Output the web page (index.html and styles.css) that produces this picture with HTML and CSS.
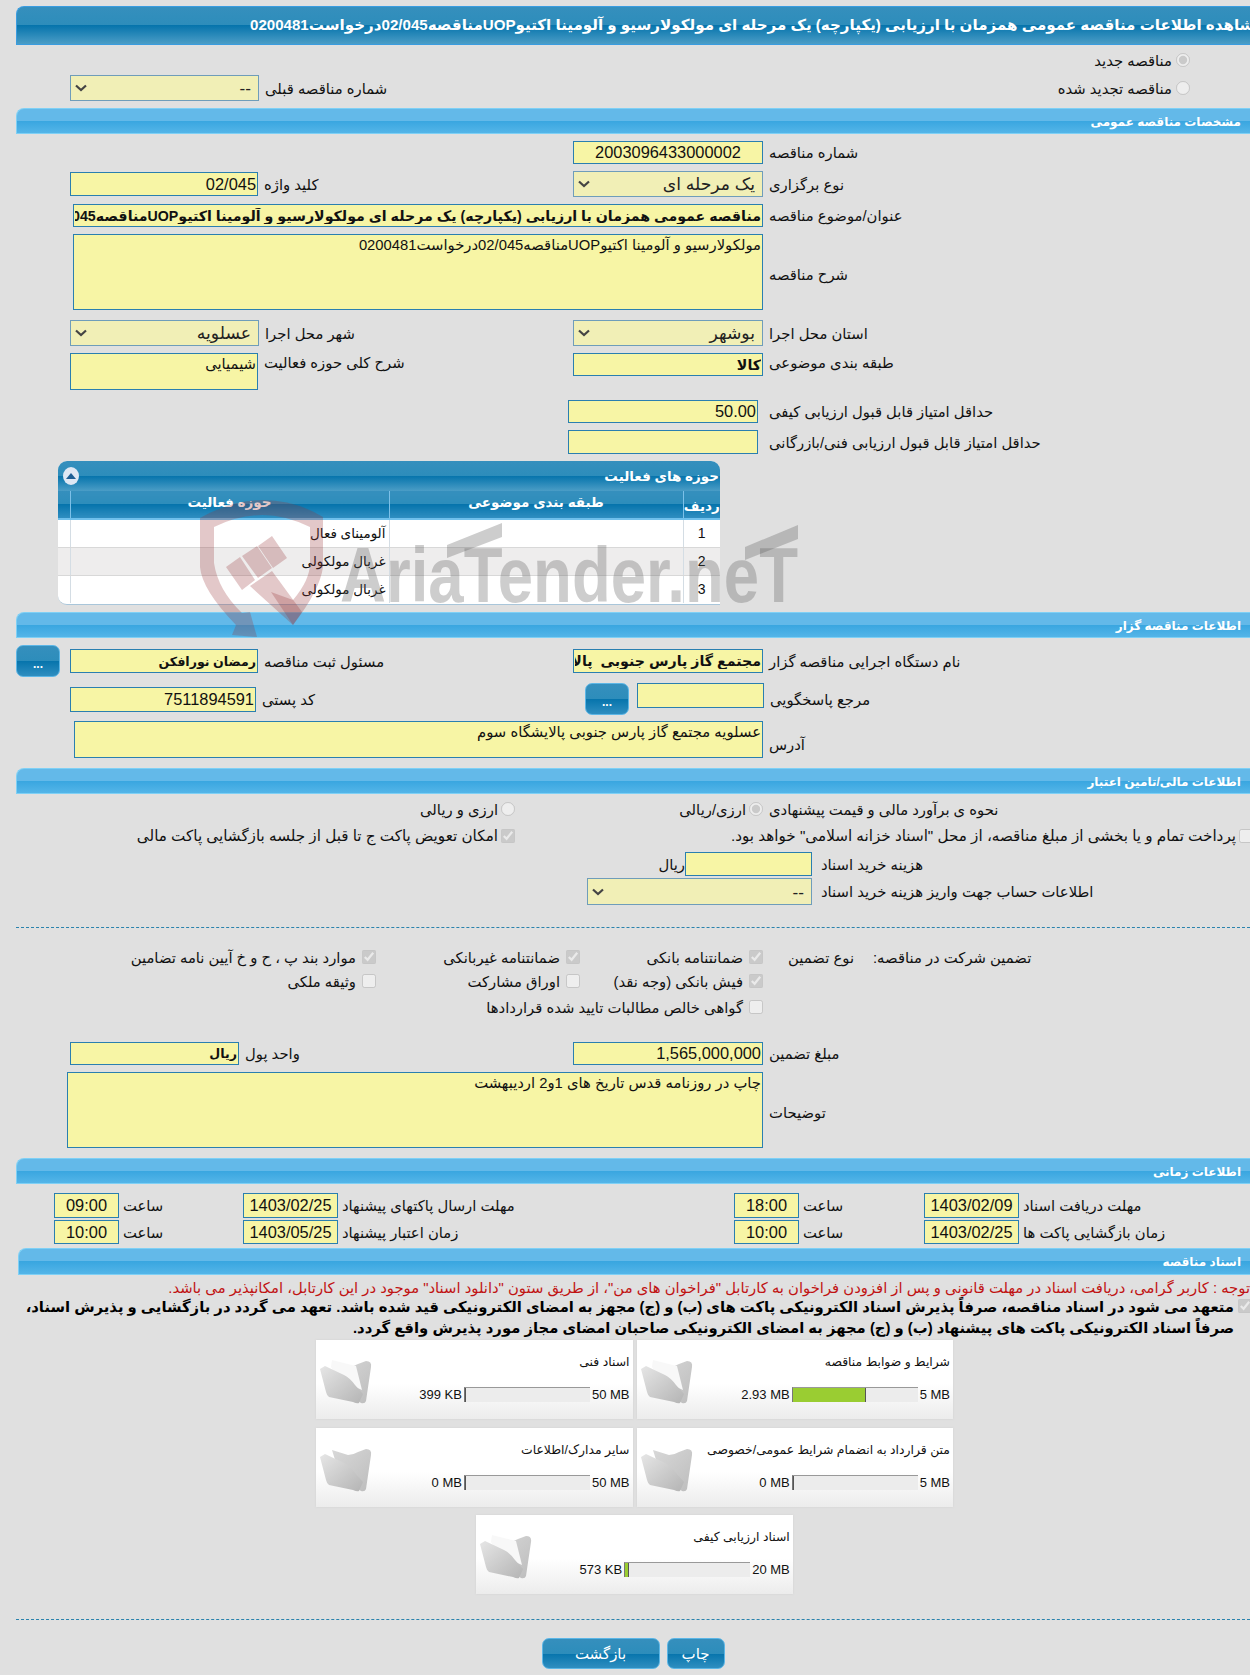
FILE: index.html
```html
<!DOCTYPE html>
<html lang="fa">
<head>
<meta charset="utf-8">
<title>مشاهده اطلاعات مناقصه</title>
<link rel="stylesheet" href="styles.css">
</head>
<body>
<svg class="defs" width="0" height="0" aria-hidden="true">
  <defs>
    <linearGradient id="fg" x1="0" y1="0" x2="1" y2="1"><stop offset="0" stop-color="#e6e6e6"/><stop offset="1" stop-color="#b4b4b4"/></linearGradient>
    <linearGradient id="bg" x1="0" y1="0" x2="1" y2="1"><stop offset="0" stop-color="#d8d8d8"/><stop offset="1" stop-color="#bdbdbd"/></linearGradient>
    <symbol id="folder-empty" viewBox="0 0 52 46">
      <path d="M12 4 L28 9 Q33 9 38 6 L46 3 Q52 3 51 9 L46 43 Q45 46 41 45 L20 30 Z" fill="url(#bg)"/>
      <path d="M0 11 L5 8 L24 17 Q30 20 35 27 L43 36 L39 45 Q37 46 33 44 L9 39 Q7 38 6 34 Z" fill="url(#fg)"/>
    </symbol>
    <symbol id="folder-full" viewBox="0 0 52 46">
      <path d="M12 4 L28 9 Q33 9 38 6 L46 3 Q52 3 51 9 L46 43 Q45 46 41 45 L20 30 Z" fill="url(#bg)"/>
      <path d="M12 2 L36 8 L42 32 L20 22 L11 9 Z" fill="#f8f8f8"/>
      <path d="M0 11 L5 8 L24 17 Q30 20 35 27 L43 36 L39 45 Q37 46 33 44 L9 39 Q7 38 6 34 Z" fill="url(#fg)"/>
    </symbol>
  </defs>
</svg>

<div class="title-bar"><span class="title-text">مشاهده اطلاعات مناقصه عمومی همزمان با ارزیابی (یکپارچه) یک مرحله ای مولکولارسیو و آلومینا اکتیوUOPمناقصه02/045درخواست0200481</span></div>

<div class="row h30">
  <div class="opt-right"><input type="radio" disabled checked><span class="lbl">مناقصه جدید</span></div>
</div>
<div class="row">
  <div class="col-a">
    <select class="sel w189 h26" disabled dir="rtl"><option>--</option></select>
    <span class="lbl">شماره مناقصه قبلی</span>
  </div>
  <div class="col-b end"><div class="opt-right"><input type="radio" disabled><span class="lbl">مناقصه تجدید شده</span></div></div>
</div>

<div class="bar mt7"><span class="bar-text">مشخصات مناقصه عمومی</span></div>

<div class="row mt7">
  <div class="col-a"></div>
  <div class="col-b"><input class="fld w190 h23 center" readonly value="2003096433000002"><span class="lbl">شماره مناقصه</span></div>
</div>
<div class="row mt7">
  <div class="col-a"><input class="fld w188 h24" readonly dir="rtl" value="02/045"><span class="lbl">کلید واژه</span></div>
  <div class="col-b"><select class="sel w190 h26" disabled dir="rtl"><option>یک مرحله ای</option></select><span class="lbl">نوع برگزاری</span></div>
</div>
<div class="row mt7">
  <div class="col-wide"><input class="fld w690 h23 strong" readonly dir="rtl" value="مناقصه عمومی همزمان با ارزیابی (یکپارچه) یک مرحله ای مولکولارسیو و آلومینا اکتیوUOPمناقصه02/045درخواست0200481"><span class="lbl">عنوان/موضوع مناقصه</span></div>
</div>
<div class="row mt7">
  <div class="col-wide"><textarea class="fld ta w690 h76" readonly dir="rtl">مولکولارسیو و آلومینا اکتیوUOPمناقصه02/045درخواست0200481</textarea><span class="lbl">شرح مناقصه</span></div>
</div>
<div class="row mt10">
  <div class="col-a"><select class="sel w189 h26" disabled dir="rtl"><option>عسلویه</option></select><span class="lbl">شهر محل اجرا</span></div>
  <div class="col-b"><select class="sel w190 h26" disabled dir="rtl"><option>بوشهر</option></select><span class="lbl">استان محل اجرا</span></div>
</div>
<div class="row mt7 top">
  <div class="col-a"><textarea class="fld ta w188 h37" readonly dir="rtl">شیمیایی</textarea><span class="lbl">شرح کلی حوزه فعالیت</span></div>
  <div class="col-b"><input class="fld w190 h23 strong" readonly dir="rtl" value="کالا"><span class="lbl">طبقه بندی موضوعی</span></div>
</div>
<div class="row mt10">
  <div class="col-a"></div>
  <div class="col-b shifted"><input class="fld w190 h23" readonly dir="rtl" value="50.00"><span class="lbl">حداقل امتیاز قابل قبول ارزیابی کیفی</span></div>
</div>
<div class="row mt7">
  <div class="col-a"></div>
  <div class="col-b shifted"><input class="fld w190 h24" readonly dir="rtl" value=""><span class="lbl">حداقل امتیاز قابل قبول ارزیابی فنی/بازرگانی</span></div>
</div>

<section class="panel">
  <div class="panel-head">
    <span class="collapse"><svg width="10" height="6" viewBox="0 0 10 6"><path d="M5 0 L10 6 H0 Z" fill="#1f5f95"/></svg></span>
    <span class="panel-title">حوزه های فعالیت</span>
  </div>
  <table class="grid-table">
    <thead><tr><th class="c-num">ردیف</th><th class="c-cat">طبقه بندی موضوعی</th><th class="c-act">حوزه فعالیت</th><th class="c-end"></th></tr></thead>
    <tbody>
      <tr><td class="c-num">1</td><td></td><td>آلومینای فعال</td><td></td></tr>
      <tr class="alt"><td class="c-num">2</td><td></td><td>غربال مولکولی</td><td></td></tr>
      <tr><td class="c-num">3</td><td></td><td>غربال مولکولی</td><td></td></tr>
    </tbody>
  </table>
</section>

<div class="bar mt7"><span class="bar-text">اطلاعات مناقصه گزار</span></div>

<div class="row mt7 h32">
  <div class="col-a flush"><button class="btn dots" type="button">...</button><input class="fld w188 h24 strong-s" readonly dir="rtl" value="رمضان نورافکن"><span class="lbl">مسئول ثبت مناقصه</span></div>
  <div class="col-b"><input class="fld w190 h24 strong" readonly dir="rtl" value="مجتمع گاز پارس جنوبی  پالایشگاه سوم"><span class="lbl">نام دستگاه اجرایی مناقصه گزار</span></div>
</div>
<div class="row mt6 h32">
  <div class="col-a"><input class="fld w186 h25" readonly dir="rtl" value="7511894591"><span class="lbl">کد پستی</span></div>
  <div class="col-b ref"><button class="btn dots" type="button">...</button><input class="fld w127 h25 up" readonly value=""><span class="lbl">مرجع پاسخگویی</span></div>
</div>
<div class="row mt6">
  <div class="col-wide left58"><textarea class="fld ta w689 h37" readonly dir="rtl">عسلویه مجتمع گاز پارس جنوبی پالایشگاه سوم</textarea><span class="lbl low">آدرس</span></div>
</div>

<div class="bar mt10"><span class="bar-text">اطلاعات مالی/تامین اعتبار</span></div>

<div class="row mt6 h18">
  <div class="col-half"><div class="chk"><input type="radio" disabled><span class="lbl">ارزی و ریالی</span></div></div>
  <div class="col-mid"><div class="chk"><input type="radio" disabled checked><span class="lbl">ارزی/ریالی</span></div></div>
  <span class="lbl lbl-gap">نحوه ی برآورد مالی و قیمت پیشنهادی</span>
</div>
<div class="row mt8 h20 wide-text">
  <div class="col-half"><div class="chk"><input type="checkbox" disabled checked><span class="lbl">امکان تعویض پاکت ج تا قبل از جلسه بازگشایی پاکت مالی</span></div></div>
  <div class="col-rest"><div class="chk"><input type="checkbox" disabled><span class="lbl">پرداخت تمام و یا بخشی از مبلغ مناقصه، از محل "اسناد خزانه اسلامی" خواهد بود.</span></div></div>
</div>
<div class="row mt6 fee">
  <span class="lbl unit">ریال</span><input class="fld w127 h24" readonly value=""><span class="lbl">هزینه خرید اسناد</span>
</div>
<div class="row mt2 account">
  <select class="sel w225 h27" disabled dir="rtl"><option>--</option></select><span class="lbl">اطلاعات حساب جهت واریز هزینه خرید اسناد</span>
</div>

<hr class="dash d1">

<div class="row g-row g-first">
  <div class="g-c1"><div class="chk"><input type="checkbox" disabled checked><span class="lbl">موارد بند پ ، ح و خ آیین نامه تضامین</span></div></div>
  <div class="g-c2"><div class="chk"><input type="checkbox" disabled checked><span class="lbl">ضمانتنامه غیربانکی</span></div></div>
  <div class="g-c3"><div class="chk"><input type="checkbox" disabled checked><span class="lbl">ضمانتنامه بانکی</span></div></div>
  <span class="lbl g-type">نوع تضمین</span>
  <span class="lbl">تضمین شرکت در مناقصه:</span>
</div>
<div class="row g-row mt4">
  <div class="g-c1"><div class="chk"><input type="checkbox" disabled><span class="lbl">وثیقه ملکی</span></div></div>
  <div class="g-c2"><div class="chk"><input type="checkbox" disabled><span class="lbl">اوراق مشارکت</span></div></div>
  <div class="g-c3"><div class="chk"><input type="checkbox" disabled checked><span class="lbl">فیش بانکی (وجه نقد)</span></div></div>
</div>
<div class="row g-row mt6">
  <div class="g-c1"></div>
  <div class="g-c23"><div class="chk"><input type="checkbox" disabled><span class="lbl">گواهی خالص مطالبات تایید شده قراردادها</span></div></div>
</div>

<div class="row mt25">
  <div class="col-a"><input class="fld w169 h23 strong-s" readonly dir="rtl" value="ریال"><span class="lbl">واحد پول</span></div>
  <div class="col-b"><input class="fld w190 h23" readonly dir="rtl" value="1,565,000,000"><span class="lbl">مبلغ تضمین</span></div>
</div>
<div class="row mt7">
  <div class="col-wide left67"><textarea class="fld ta w696 h76" readonly dir="rtl">چاپ در روزنامه قدس تاریخ های 1و2 اردیبهشت</textarea><span class="lbl">توضیحات</span></div>
</div>

<div class="bar mt10"><span class="bar-text">اطلاعات زمانی</span></div>

<div class="time-row mt9">
  <div class="t-cell"><input class="fld w65 h25 center" readonly value="09:00"><span class="lbl">ساعت</span></div>
  <div class="t-cell"><input class="fld w95 h25 center" readonly value="1403/02/25"><span class="lbl">مهلت ارسال پاکتهای پیشنهاد</span></div>
  <div class="t-cell"><input class="fld w65 h25 center" readonly value="18:00"><span class="lbl">ساعت</span></div>
  <div class="t-cell"><input class="fld w95 h25 center" readonly value="1403/02/09"><span class="lbl">مهلت دریافت اسناد</span></div>
</div>
<div class="time-row mt2">
  <div class="t-cell"><input class="fld w65 h24 center" readonly value="10:00"><span class="lbl">ساعت</span></div>
  <div class="t-cell"><input class="fld w95 h24 center" readonly value="1403/05/25"><span class="lbl">زمان اعتبار پیشنهاد</span></div>
  <div class="t-cell"><input class="fld w65 h24 center" readonly value="10:00"><span class="lbl">ساعت</span></div>
  <div class="t-cell"><input class="fld w95 h24 center" readonly value="1403/02/25"><span class="lbl">زمان بازگشایی پاکت ها</span></div>
</div>

<div class="bar bar-docs mt4"><span class="bar-text">اسناد مناقصه</span></div>

<div class="notice">توجه : کاربر گرامی، دریافت اسناد در مهلت قانونی و پس از افزودن فراخوان به کارتابل "فراخوان های من"، از طریق ستون "دانلود اسناد" موجود در این کارتابل، امکانپذیر می باشد.</div>
<div class="pledge">
  <input type="checkbox" disabled checked>
  <div class="pledge-text">متعهد می شود در اسناد مناقصه، صرفاً پذیرش اسناد الکترونیکی پاکت های (ب) و (ج) مجهز به امضای الکترونیکی قید شده باشد. تعهد می گردد در بازگشایی و پذیرش اسناد،<br>صرفاً اسناد الکترونیکی پاکت های پیشنهاد (ب) و (ج) مجهز به امضای الکترونیکی صاحبان امضای مجاز مورد پذیرش واقع گردد.</div>
</div>

<div class="cards">
  <article class="card">
    <div class="card-body"><div class="card-title">شرایط و ضوابط مناقصه</div>
      <div class="meter"><span>2.93 MB</span><div class="track"><div class="fill" style="width:59%"></div></div><span>5 MB</span></div></div>
    <svg class="folder"><use href="#folder-full"/></svg>
  </article>
  <article class="card">
    <div class="card-body"><div class="card-title">اسناد فنی</div>
      <div class="meter"><span>399 KB</span><div class="track"><div class="fill" style="width:1%"></div></div><span>50 MB</span></div></div>
    <svg class="folder"><use href="#folder-full"/></svg>
  </article>
  <article class="card">
    <div class="card-body"><div class="card-title">متن قرارداد به انضمام شرایط عمومی/خصوصی</div>
      <div class="meter"><span>0 MB</span><div class="track"><div class="fill" style="width:0"></div></div><span>5 MB</span></div></div>
    <svg class="folder"><use href="#folder-empty"/></svg>
  </article>
  <article class="card">
    <div class="card-body"><div class="card-title">سایر مدارک/اطلاعات</div>
      <div class="meter"><span>0 MB</span><div class="track"><div class="fill" style="width:0"></div></div><span>50 MB</span></div></div>
    <svg class="folder"><use href="#folder-empty"/></svg>
  </article>
  <article class="card">
    <div class="card-body"><div class="card-title">اسناد ارزیابی کیفی</div>
      <div class="meter"><span>573 KB</span><div class="track"><div class="fill" style="width:3%"></div></div><span>20 MB</span></div></div>
    <svg class="folder"><use href="#folder-full"/></svg>
  </article>
</div>

<hr class="dash d2">

<div class="actions">
  <button class="btn back" type="button">بازگشت</button>
  <button class="btn print" type="button">چاپ</button>
</div>

<svg class="watermark" width="1250" height="1676" viewBox="0 0 1250 1676" aria-hidden="true">
  <path class="wm-red" fill-rule="evenodd" d="M200 518 Q232 500 263 500 Q295 500 323 517 L323 567 Q320 590 293 625 L271 592 L293 600 Q310 580 310 563 L310 527 Q285 515 263 515 Q238 515 214 527 L214 563 Q218 590 242 613 L250 612 L257 637 L232 635 L236 625 Q202 590 200 567 Z"/>
  <path class="wm-red" d="M226 567 L240 557 L255 580 L242 590 Z M242 556 L257 546 L272 568 L258 578 Z M258 546 L272 536 L287 558 L273 568 Z M250 586 L272 571 L302 612 L293 625 Z"/>
  <text class="wm-text" x="340" y="602" textLength="458" lengthAdjust="spacingAndGlyphs">AriaTender.neT</text>
  <path class="wm-gray" d="M447 545 L502 523 L502 537 L447 558 Z M745 547 L798 525 L798 539 L745 560 Z"/>
</svg>
</body>
</html>
```

FILE: styles.css
```css
* { box-sizing: border-box; }
html { background: #fff; }
body {
  margin: 0;
  width: 1250px;
  height: 1675px;
  background: #e0e0e0;
  overflow: hidden;
  position: relative;
  font-family: "Liberation Sans", "DejaVu Sans", sans-serif;
  font-size: 14.8px;
  color: #111;
}
.defs { position: absolute; }

/* Bars */
.title-bar {
  margin: 6px 0 0 16px;
  height: 39px;
  padding-left: 233px;
  background: linear-gradient(#358fbd 0, #2d8dbb 50%, #0674ac 50%, #4b9dc6 100%);
  border: 1px solid #3a9ce0;
  border-right: 0;
  border-radius: 8px 0 0 0;
  overflow: hidden;
  white-space: nowrap;
  color: #fff;
  font-weight: bold;
  font-size: 15.1px;
  line-height: 36px;
}
.title-text { display: inline-block; direction: rtl; }
.bar {
  margin-left: 16px;
  height: 26px;
  background: linear-gradient(#63b9e9 0, #63b9e9 50%, #39a6e0 50%, #54b5e8 100%);
  border: 1px solid #7fd0f5;
  border-right: 0;
  border-radius: 8px 0 0 0;
  color: #fff;
  font-weight: bold;
  font-size: 12px;
  line-height: 26px;
  text-align: right;
  padding-right: 9px;
}
.bar-text { display: inline-block; direction: rtl; }
.bar-docs { margin-left: 18px; height: 27px; }

/* Rows */
.row { display: flex; align-items: center; padding-left: 16px; }
.row.top { align-items: flex-start; }
.col-a { width: 557px; padding-left: 54px; display: flex; align-items: center; gap: 6px; flex: none; }
.col-a.flush { padding-left: 0; }
.col-b { flex: 1; display: flex; align-items: center; gap: 6px; }
.row.top .col-a, .row.top .col-b { align-items: flex-start; }
.col-b.end { justify-content: flex-end; }
.col-b.shifted { margin-left: -5px; gap: 11px; }
.col-b.ref { margin-left: 12px; gap: 4px; }
.col-b.ref .lbl { margin-left: 2px; }
.col-wide { flex: 1; display: flex; align-items: center; gap: 6px; padding-left: 57px; }
.col-wide.left58 { padding-left: 58px; }
.col-wide.left67 { padding-left: 51px; }
.lbl { direction: rtl; white-space: nowrap; }
.lbl.low { margin-top: 10px; }
.ta.h76 + .lbl { margin-top: 4px; }
.opt-right { display: flex; direction: rtl; align-items: center; gap: 4px; margin-right: 60px; margin-left: auto; }
.row.top .lbl { margin-top: 1px; }

.col-half { width: 499px; flex: none; display: flex; justify-content: flex-end; }
.col-mid { width: 248px; flex: none; display: flex; justify-content: flex-end; }
.col-rest { flex: 1; display: flex; justify-content: flex-end; min-width: 0; margin-right: -3px; }
.lbl-gap { margin-left: 6px; }
.chk { display: flex; direction: rtl; align-items: center; gap: 3px; white-space: nowrap; }
.chk input { flex: none; }
.wide-text .lbl { font-size: 15.2px; }
input[type="radio"], input[type="checkbox"] { margin: 0; width: 14px; height: 14px; }
.fee { padding-left: 661px; gap: 9px; }
.fee .unit { margin-right: -9px; width: 24px; }
.account { padding-left: 587px; gap: 9px; }

.g-row { min-height: 20px; }
.g-row .chk { gap: 6px; }
.g-c1 { width: 360px; flex: none; display: flex; justify-content: flex-end; }
.g-c2 { width: 204px; flex: none; display: flex; justify-content: flex-end; }
.g-c3 { width: 183px; flex: none; display: flex; justify-content: flex-end; }
.g-c23 { width: 387px; flex: none; display: flex; justify-content: flex-end; }
.g-type { margin: 0 19px 0 25px; width: 66px; }

/* Fields */
.fld {
  margin: 0;
  padding: 0 1px;
  border: 1px solid #2a7fb0;
  background: #f7f5a5;
  color: #111;
  font-family: "Liberation Sans", "DejaVu Sans", sans-serif;
  font-size: 16.4px;
  outline: none;
  flex: none;
}
.fld.center { text-align: center; }
.fld.strong { font-weight: bold; font-size: 14.2px; }
.fld.strong-s { font-weight: bold; font-size: 12.6px; }
.fld.up { align-self: flex-start; }
.ta { resize: none; display: block; font-size: 14.8px; padding: 2px 1px; overflow: hidden; line-height: 17px; }
.sel {
  margin: 0;
  border: 1px solid #6f9dba;
  background: #f1efb6 url("data:image/svg+xml,%3Csvg xmlns='http://www.w3.org/2000/svg' width='12' height='8'%3E%3Cpath d='M1 1.5 L6 6 L11 1.5' fill='none' stroke='%23444' stroke-width='2.2'/%3E%3C/svg%3E") no-repeat 4px center;
  appearance: none;
  color: #222;
  opacity: 1;
  font-family: "Liberation Sans", "DejaVu Sans", sans-serif;
  font-size: 17.2px;
  flex: none;
  padding: 0 7px 0 20px;
}
.w65 { width: 65px; } .w95 { width: 95px; } .w127 { width: 127px; } .w169 { width: 169px; }
.w186 { width: 186px; } .w188 { width: 188px; } .w189 { width: 189px; } .w190 { width: 190px; }
.w225 { width: 225px; } .w689 { width: 689px; } .w690 { width: 690px; } .w696 { width: 696px; }
.h18 { height: 18px; } .h20 { height: 20px; } .h23 { height: 23px; } .h24 { height: 24px; }
.h25 { height: 25px; } .h26 { height: 26px; } .h27 { height: 27px; } .h30 { height: 30px; }
.h32 { height: 32px; } .h37 { height: 37px; } .h76 { height: 76px; }
.mt2 { margin-top: 2px; } .mt4 { margin-top: 4px; } .mt6 { margin-top: 6px; } .mt7 { margin-top: 7px; }
.mt8 { margin-top: 8px; } .mt9 { margin-top: 9px; } .mt10 { margin-top: 10px; } .mt25 { margin-top: 25px; }

/* Buttons */
.btn {
  border: 1px solid #5cb6e6;
  border-radius: 7px;
  background: linear-gradient(#358fbd 0, #2d8dbb 50%, #0674ac 50%, #2f8ec0 100%);
  color: #fff;
  font-family: "Liberation Sans", "DejaVu Sans", sans-serif;
  font-size: 15px;
  padding: 0;
  flex: none;
}
.dots { width: 44px; height: 32px; font-weight: bold; font-size: 12px; padding-top: 5px; margin-right: 4px; }
.back { width: 118px; height: 31px; }
.print { width: 58px; height: 31px; }

/* Panel */
.panel {
  margin: 7px 0 0 58px;
  width: 662px;
  height: 144px;
  background: #fff;
  border-radius: 9px 9px 0 9px;
  border-bottom: 1px solid #a9c6da;
  overflow: hidden;
}
.panel-head {
  height: 30px;
  display: flex;
  justify-content: space-between;
  align-items: center;
  padding: 0 1px 0 5px;
  background: linear-gradient(#358fbd 0, #2d8dbb 50%, #0674ac 50%, #4b9dc6 100%);
  color: #fff;
  font-weight: bold;
  font-size: 13.5px;
}
.panel-title { direction: rtl; }
.collapse {
  width: 16px;
  height: 18px;
  border-radius: 50%;
  background: #dfe8f4;
  display: flex;
  align-items: center;
  justify-content: center;
}
.grid-table { width: 100%; direction: rtl; border-collapse: collapse; table-layout: fixed; }
.grid-table th {
  height: 28px;
  background: linear-gradient(#358fbd 0, #2d8dbb 50%, #0674ac 50%, #2f8ec0 100%);
  border-left: 1px solid #7cc0e8;
  border-bottom: 2px solid #6fc0ec;
  color: #fff;
  font-size: 13.5px;
  padding: 0 0 6px;
}
.grid-table th.c-num { padding: 2px 0 0; }
.grid-table th.c-end { border-left: 0; }
.c-num { width: 37px; }
.c-cat { width: 294px; }
.c-act { width: 319px; }
.grid-table td {
  height: 28px;
  border-left: 1px solid #d4dde4;
  border-bottom: 1px solid #d8d8d8;
  text-align: right;
  font-size: 13.5px;
  padding: 0 3px;
  white-space: nowrap;
}
.grid-table td.c-num { text-align: center; font-size: 14px; padding: 0; }
.grid-table td:last-child { border-left: 0; }
.grid-table tr:last-child td { border-bottom: 0; }
.alt td { background: #eeeded; }

/* Dashes */
.dash { border: 0; border-top: 1px dashed #2b83ad; margin: 0 0 0 16px; height: 0; }
.d1 { margin-top: 22px; }
.d2 { margin-top: 25px; }
.g-first { margin-top: 19px; }

/* Time */
.time-row { display: grid; grid-template-columns: 189px 491px 190px 1fr; padding-left: 54px; }
.t-cell { display: flex; align-items: center; gap: 4px; }

/* Docs */
.notice {
  margin-top: 4px;
  height: 18px;
  direction: rtl;
  color: #c01313;
  white-space: nowrap;
  line-height: 18px;
  font-size: 14.8px;
}
.pledge { display: flex; direction: rtl; align-items: flex-start; font-weight: bold; color: #000; font-size: 14.8px; line-height: 20.5px; }
.pledge input { margin: 2px -2px 0 4px; flex: none; }
.pledge-text { white-space: nowrap; }

.cards {
  margin: 2px 0 0 284.5px;
  width: 700px;
  display: flex;
  flex-wrap: wrap;
  direction: rtl;
  justify-content: center;
  row-gap: 8.5px;
  column-gap: 4px;
}
.card {
  width: 316.5px;
  height: 79px;
  direction: ltr;
  display: flex;
  flex-direction: row-reverse;
  justify-content: space-between;
  background: linear-gradient(#fff 0, #fff 55%, #ececec 100%);
  box-shadow: 0 0 2px #cfcfcf;
  position: relative;
}
.card-body { display: flex; flex-direction: column; align-items: flex-end; padding: 14px 3px 0 0; flex: 1; }
.card-title { direction: rtl; font-size: 12.4px; white-space: nowrap; line-height: 16px; }
.meter { display: flex; align-items: center; gap: 2px; margin-top: 17px; font-size: 13px; height: 15px; }
.track { width: 126px; height: 15px; background: #ececec; border-top: 1px solid #999; border-left: 1px solid #777; }
.fill { height: 100%; background: #9acd32; border-right: 1px solid #555; }
.folder { position: absolute; left: 4px; top: 18px; width: 52px; height: 46px; }

.actions { margin-top: 18px; padding-left: 16px; display: flex; justify-content: center; gap: 7px; }

/* Watermark */
.watermark { position: absolute; left: 0; top: 0; pointer-events: none; }
.wm-red { fill: rgba(150, 50, 55, .27); }
.wm-gray { fill: rgba(90, 90, 90, .3); }
.wm-text { font-family: "Liberation Sans", sans-serif; font-weight: bold; font-size: 78px; fill: rgba(90, 90, 90, .3); }
```
